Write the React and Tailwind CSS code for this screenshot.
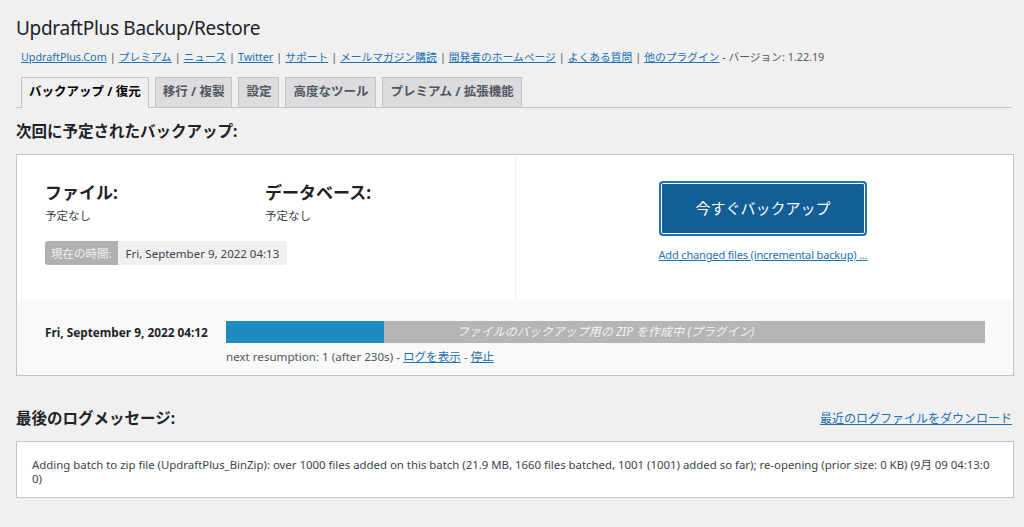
const font = { fontFamily: '"Noto Sans", "Noto Sans CJK JP", sans-serif' };

const Sep = () => <span className="text-[#50575e] mx-[3px]">|</span>;

const Link = ({ children }) => (
  <a className="text-[#2271b1] underline">{children}</a>
);

const Tabs = () => {
  const tabs = ["移行 / 複製", "設定", "高度なツール", "プレミアム / 拡張機能"];
  return (
    <div className="flex items-end gap-[6px] border-b border-[#c3c4c7] pl-[5px] mt-[12px] mr-[2px]">
      <div className="h-[31px] px-[7px] flex items-center border border-[#c3c4c7] border-b-0 bg-[#f0f0f1] text-[12.5px] font-bold text-[#000] -mb-px pb-px">
        バックアップ / 復元
      </div>
      {tabs.map((t) => (
        <div key={t} className="h-[30px] px-[7px] flex items-center border border-[#c3c4c7] border-b-0 bg-[#dcdcde] text-[12.5px] font-bold text-[#50575e]">
          {t}
        </div>
      ))}
    </div>
  );
};

export default function App() {
  return (
    <div className="min-h-[527px] bg-[#f0f0f1] text-[#3c434a] pl-[16px] pr-[10px] pt-[14px]" style={font}>
      <h1 className="text-[19px] tracking-[-0.3px] leading-[28px] text-[#1d2327]">UpdraftPlus Backup/Restore</h1>
      <div className="text-[10.75px] mt-[7px] leading-[16px] pl-[5px]">
        <Link>UpdraftPlus.Com</Link><Sep />
        <Link>プレミアム</Link><Sep />
        <Link>ニュース</Link><Sep />
        <Link>Twitter</Link><Sep />
        <Link>サポート</Link><Sep />
        <Link>メールマガジン購読</Link><Sep />
        <Link>開発者のホームページ</Link><Sep />
        <Link>よくある質問</Link><Sep />
        <Link>他のプラグイン</Link>
        <span className="text-[#50575e]"> - バージョン: 1.22.19</span>
      </div>
      <Tabs />

      <h2 className="text-[15.5px] font-bold text-[#1d2327] mt-[12px] leading-[22px]">次回に予定されたバックアップ:</h2>

      <div className="mt-[12px] border border-[#c3c4c7] bg-white">
        <div className="flex h-[145px]">
          <div className="w-[499px] border-r border-[#f0f0f0] pl-[28px] pt-[27px]">
            <div className="flex">
              <div className="w-[220px]">
                <div className="text-[17px] font-bold text-[#1d2327] leading-[22px]">ファイル:</div>
                <div className="text-[11.5px] text-[#3c434a] mt-[3px]">予定なし</div>
              </div>
              <div>
                <div className="text-[17px] font-bold text-[#1d2327] leading-[22px]">データベース:</div>
                <div className="text-[11.5px] text-[#3c434a] mt-[3px]">予定なし</div>
              </div>
            </div>
            <div className="inline-flex mt-[17px] text-[11.5px] rounded-[3px] overflow-hidden h-[24px]">
              <span className="bg-[#b0b0b0] text-[#f0f0f0] px-[6px] flex items-center">現在の時間:</span>
              <span className="bg-[#f0f0f0] text-[#3c434a] px-[8px] flex items-center">Fri, September 9, 2022 04:13</span>
            </div>
          </div>
          <div className="flex-1 flex flex-col items-center pt-[26px] pr-[3px]">
            <button className="w-[208px] h-[55px] rounded-[4px] bg-[#135e96] border-[2px] border-[#2271b1] shadow-[inset_0_0_0_1px_#ffffff] text-white text-[15px]">
              今すぐバックアップ
            </button>
            <a className="text-[11px] text-[#2271b1] underline mt-[11px] tracking-[-0.15px]">Add changed files (incremental backup) ...</a>
          </div>
        </div>
        <div className="bg-[#f9f9f9] h-[75px] flex pl-[28px] pt-[20px]">
          <div className="w-[181px] text-[11.8px] font-bold text-[#1d2327] leading-[24px]">Fri, September 9, 2022 04:12</div>
          <div className="w-[759px] pt-[1px]">
            <div className="relative h-[22px] bg-[#b5b5b5] flex">
              <div className="w-[158px] bg-[#1e8cbe]"></div>
              <div className="absolute inset-0 flex items-center justify-center text-[12px] italic text-[#f3f3f3]">
                ファイルのバックアップ用の ZIP を作成中 (プラグイン)
              </div>
            </div>
            <div className="text-[11.6px] text-[#50575e] mt-[5px]">
              next resumption: 1 (after 230s) - <Link>ログを表示</Link> - <Link>停止</Link>
            </div>
          </div>
        </div>
      </div>

      <div className="flex justify-between items-end mt-[31px]">
        <h2 className="text-[15.5px] font-bold text-[#1d2327] leading-[22px]">最後のログメッセージ:</h2>
        <a className="text-[12px] text-[#2271b1] underline mr-[2px] mb-[1px]">最近のログファイルをダウンロード</a>
      </div>

      <div className="mt-[12px] border border-[#c3c4c7] bg-white px-[15px] pt-[16px] pb-[11px] text-[11.4px] leading-[14px] text-[#3c434a]">
        <span className="whitespace-nowrap">Adding batch to zip file (UpdraftPlus_BinZip): over 1000 files added on this batch (21.9 MB, 1660 files batched, 1001 (1001) added so far); re-opening (prior size: 0 KB) (9月 09 04:13:0</span>
        <br />
        0)
      </div>
    </div>
  );
}
